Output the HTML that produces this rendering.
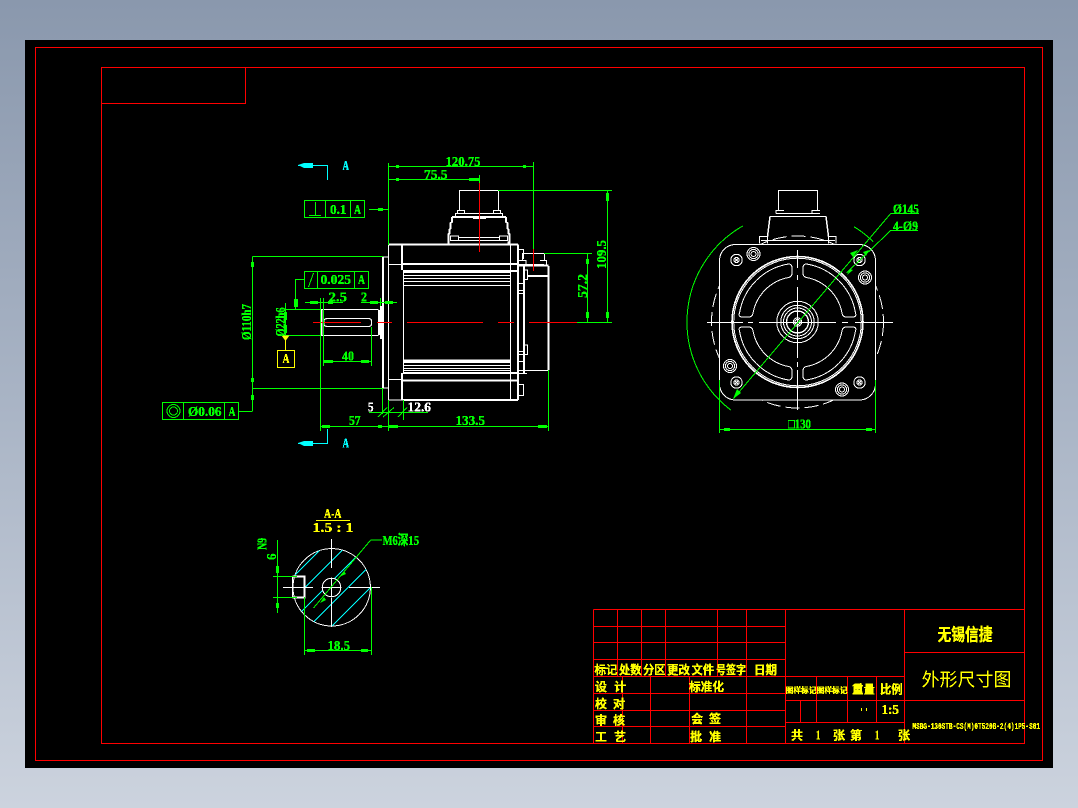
<!DOCTYPE html>
<html><head><meta charset="utf-8"><title>CAD drawing</title>
<style>
html,body{margin:0;padding:0;width:1078px;height:808px;overflow:hidden;background:linear-gradient(180deg,#8a98ad 0%,#a9b4c5 50%,#ccd3de 100%)}
svg{position:absolute;left:0;top:0;display:block}
.l{fill:none;shape-rendering:crispEdges}
.r{stroke:#f00}.g{stroke:#0f0}.w{stroke:#fff}.y{stroke:#ff0}.c{stroke:#0ff}
.t{font-family:"Liberation Serif",serif;font-weight:700;font-size:14px;stroke-width:.35px}
.k{font-family:"Liberation Sans","Noto Sans CJK SC",sans-serif;font-weight:700;font-size:12px;stroke:#ff0;stroke-width:.25px}
.fg{fill:#0f0;stroke:#0f0}.fw{fill:#fff;stroke:#fff}.fy{fill:#ff0;stroke:#ff0}.fc{fill:#0ff;stroke:#0ff}
</style></head><body>
<svg width="1078" height="808" viewBox="0 0 1078 808" xmlns="http://www.w3.org/2000/svg">
<defs>
<filter id="al" filterUnits="userSpaceOnUse" x="0" y="0" width="1078" height="808" color-interpolation-filters="sRGB">
<feComponentTransfer><feFuncA type="discrete" tableValues="0 0 1 1"/></feComponentTransfer>
</filter>
<clipPath id="outsq"><path clip-rule="evenodd" d="M690 220H905V425H690z M719 244H876V400H719z"/></clipPath>
<path id="win" d="M-58-9A59.5 59.5 0 0 1-9-58Q-5.5-58-5.5-54V-49Q-5.5-45-9-44.5A44.5 44.5 0 0 0-44.5-9Q-45-5-49-5H-55Q-59.5-5-58-9Z"/>
<g id="bolt"><circle r="5.7"/><circle r="2.6"/><path d="M-1.500-1.500L1.500 1.500M-1.500 1.500L1.500-1.500"/></g>
<g id="scr"><circle r="6.5"/><circle r="4.6"/><circle r="2.5"/></g>
</defs>

<rect x="25" y="40" width="1028" height="728" fill="#000"/>

<!-- red frames and title block -->
<path class="l r" d="M35.5 47.5H1042.5V760.5H35.5Z M101.5 67.5H1024.5V743.5H101.5Z M101.5 103.5H245.5V67.5
M593.5 609.5H1024.5 M593.5 609.5V743.5
M593.5 626.5H785.5 M593.5 642.5H785.5 M593.5 659.5H785.5 M593.5 676.5H904.5 M593.5 693.5H785.5 M593.5 710.5H785.5 M593.5 726.5H785.5
M617.5 609.5V676.5 M641.5 609.5V676.5 M665.5 609.5V676.5 M717.5 609.5V676.5 M746.5 609.5V743.5 M785.5 609.5V743.5
M622.5 676.5V743.5 M650.5 676.5V743.5 M689.5 676.5V743.5
M816.5 676.5V722.5 M847.5 676.5V722.5 M876.5 676.5V722.5 M904.5 609.5V743.5
M785.5 700.5H1024.5 M785.5 722.5H904.5 M800.5 700.5V722.5 M904.5 652.5H1024.5"/>

<!-- front view white -->
<g class="l w">
<path stroke-width="1" d="M383 257H388.5M383 388H388.5M388.5 244.5H518M388.5 264.5H403M388.5 379.5H403M388.5 400H403M388.5 244.5V400
M321 309.5H378M321 335.5H378M378.5 309.5V335.5
M403.5 270V373M510.5 244.5V400
M403 272.5H510M403 275.5H510M403 278.5H510M403 281.5H510M403 285.5H510
M403 365.5H510M403 368.5H510M403 370.5H510
M518 249.5H523.5V259
M522.5 260V253.5H544.5V260M516.5 264.5H544
M523.5 270H527.5V279.5H523.5M523.5 345H527.5V354.5H523.5
M518 283.5H523.5M518 290.5H523.5M518 293.5H523.5M518 351.5H523.5M518 354.5H523.5M518 361.5H523.5M518 370.5H548M518 373.5H527
M518 384.5H523.5V395.5H518
M518.5 260.5H526V264.5H518.5V260.5ZM540 260.5H546.5V264.5"/>
<path stroke-width="2" d="M383 257V388M402 244.5V270M402 373V400M403 264H518M403 271H518M403 361H510M403 373H518M403 380.5H518M403 400H518M518 244.5V400M388 244.5H518M524 265V373M548.5 266V370M518 265.5H548.5M527 276H548M321.5 309V336M380 310V335"/>
<rect x="380" y="306" width="3" height="33" fill="#fff" stroke="none"/>
<rect x="403" y="359.5" width="107" height="3.5" fill="#fff" stroke="none"/>
<path stroke-width="1.2" d="M328 318.5H368Q371.5 318.5 371.5 321V324Q371.5 326.5 368 326.5H328Q323.8 326.5 323.8 324V321Q323.8 318.5 328 318.5Z"/>
<!-- connector front -->
<path stroke-width="1" d="M459.5 211V190.5H498.5V211M457.5 213.5V210.5H464.5V213.5M493.5 213.5V210.5H500.5V213.5M455.5 216V213.5H502.5V216M473.5 217V218.7H485.5V217
M450.5 240V236H458.5V240M499.5 240V236H507.5V240M458 237.5H500M450 240.5H508M449 241.5V244M508 241.5V244"/>
<path stroke-width="1.6" d="M452 217H506M452 217V222L450.5 223V228.5L449.5 229.5V233.5L448.5 234V244M506 217V222L507.5 223V228.5L508.5 229.5V233.5L509.5 234V244"/>
</g>

<!-- red centerlines -->
<path class="l r" d="M313 322.5H361M377 322.5H392M407 322.5H483M498 322.5H514M529 322.5H577M479.5 183V252M533.5 249V271"/>

<!-- green dims -->
<path class="l g" d="M388.5 163V245M388.5 400V431M388.5 166.5H533.5M533.5 162V249M388.5 179.5H479.5M479.5 175V183
M498 190.5H612M607.5 190.5V322M544 253.5H592M587.5 253.5V322M577 322.5H612
M548.5 370V431M320.5 426.5H548.5M369 412.5H428M382.5 388V414M403.5 400V420
M252.5 256.5V411M252.5 256.5H383M252.5 388.5H383M239 411.5H252.5
M369 209.5H388.5M304 279.5H295.5V309
M305 302.5H343M361 302.5H397M320.5 298V431M323.5 298V366M371.5 327V366M380.5 298V306
M323.5 361.5H371.5M285.5 309.5H320M285.5 335.5H320M285.5 303V336
M378 417L387 407.5M383 417L394 407.5M398 417L407 407.5
M304.5 200.5H364.5V217.5H304.5ZM325.5 200.5V217.5M350.5 200.5V217.5
M309 215.5H321M315.5 202V215.5
M304.5 271.5H368.5V288.5H304.5ZM317.5 271.5V288.5M354.5 271.5V288.5M308.5 287L313.5 273
M162.5 402.5H238.5V419.5H162.5ZM183.5 402.5V419.5M224.5 402.5V419.5"/>
<g class="l g"><circle cx="173.5" cy="411" r="6.5"/><circle cx="173.5" cy="411" r="4"/></g>
<path fill="#0f0" d="M396 165h3v3h-3zM523 165h3v3h-3zM396 178h3v3h-3zM469 178h10v3h-10zM606 193h3v8h-3zM606 312h3v6h-3zM586 259h3v5h-3zM586 312h3v6h-3zM322 425h8v3h-8zM378 425h4v3h-4zM389 425h9v3h-9zM538 425h9v3h-9zM251 262h3v5h-3zM251 378h3v4h-3zM251 395h3v5h-3zM310 301h8v3h-8zM328 301h5v3h-5zM370 301h8v3h-8zM385 301h8v3h-8zM324 360h9v3h-9zM361 360h8v3h-8zM284 312h3v8h-3zM284 325h3v8h-3zM294 299h4v8h-4zM378 208h5v3h-5z"/>

<!-- yellow datum -->
<path fill="#ff0" d="M281.5 335.5H289.5L285.5 341Z"/>
<path class="l y" d="M285.5 340V350M277.5 350.5H294.5V367.5H277.5Z"/>

<!-- cyan section marks -->
<path class="l c" d="M298 165.5H327.5V180M327.5 429V443.5H298"/>
<path fill="#0ff" d="M298 165L304 163H313V168H304ZM298 443L304 441H313V446H304Z"/>

<!-- right view -->
<g class="l w">
<rect x="719.5" y="244.5" width="156" height="155.5" rx="16"/>
<circle cx="797.5" cy="322" r="86" stroke-dasharray="14 5" clip-path="url(#outsq)"/>
<circle cx="797.5" cy="322" r="65.5" stroke-width="1.6"/>
<circle cx="797.5" cy="322" r="63.8"/>
<circle cx="797.5" cy="322" r="20.7"/><circle cx="797.5" cy="322" r="16.7"/><circle cx="797.5" cy="322" r="14"/><circle cx="797.5" cy="322" r="11" stroke-width="1.4"/><circle cx="797.5" cy="322" r="4.2"/><circle cx="797.5" cy="322" r="2.6"/>
<use href="#win" transform="translate(797.5 322)"/>
<use href="#win" transform="translate(797.5 322) scale(-1 1)"/>
<use href="#win" transform="translate(797.5 322) scale(1 -1)"/>
<use href="#win" transform="translate(797.5 322) scale(-1 -1)"/>
<use href="#bolt" transform="translate(736.5 260)"/><use href="#bolt" transform="translate(859.5 260)"/>
<use href="#bolt" transform="translate(736.5 382.5)"/><use href="#bolt" transform="translate(859.5 382.5)"/>
<use href="#scr" transform="translate(753.5 254)"/><use href="#scr" transform="translate(865 277.5)"/>
<use href="#scr" transform="translate(730 366)"/><use href="#scr" transform="translate(842 389.5)"/>
<path d="M707 322.5H743M748 322.5H753M759 322.5H836M842 322.5H848M855 322.5H893M797.5 250V268M797.5 275V280M797.5 287V358M797.5 362V367M797.5 370V410
M778.5 210.5V190.5H817.5V210.5M776 213.5V210.5H784M812 213.5V210.5H820M776 213.5H820M770 216.5H826M759.5 243.5V236.5H767.5V243.5M828.5 243.5V236.5H836V243.5M761 240.5H835"/>
<path stroke-width="1.5" d="M770 216.5L767.5 236.5M826 216.5L828.5 236.5"/>
</g>
<g class="l g">
<path d="M742.7 226A110.5 110.5 0 0 0 730.7 410M854 226.7A110.5 110.5 0 0 1 873.3 241.7"/>
<path d="M733.5 398.5L890.7 213.5H919M846.7 272.7L890.7 230.5H918M719.5 380V433M875.5 380V433M719.5 429.5H875.5"/>
</g>
<path fill="#0f0" d="M724 428h6v3h-6zM866 428h6v3h-6zM733 399L741 393L737 389ZM858 250L853 257L850 253ZM869 250L866 256L863 252ZM850 269L847 275L853 270Z"/>

<!-- section view -->
<circle class="l w" cx="331.7" cy="587.3" r="38.7"/>
<path class="l c" d="M295 575L319.4 550.6M304.5 588.2L342.5 550.2M301.5 611.5L322.8 590.2M334.6 578.4L355.9 557.1M313.9 621.6L366 569.5M332 626L370.4 587.6"/>
<g class="l w">
<circle cx="331.5" cy="587.5" r="9.3"/>
<path d="M283 587.5H313M349 587.5H380M331.5 539V568M331.5 598V627M322.5 587.5H341M331.5 578V597M292.5 576.5V597.5"/>
<path stroke-width="1.8" d="M292.5 576.5H304.5V597.5H292.5"/>
</g>
<path class="l g" d="M277.5 540V613M273 576.5H297M273 597.5H297M304.5 597V655M371.5 587V655M304.5 650.5H371.5M313.5 608L370.7 540H382"/>
<path fill="#0f0" d="M276 566h3v7h-3zM276 603h3v5h-3zM307 649h8v3h-8zM361 649h7v3h-7zM339 577L344 571L346 574ZM320 603L324 597L326 600Z"/>
<path class="l y" d="M316 520.5H350"/>

<!-- text -->
<g filter="url(#al)">
<g class="t fg">
<text x="445.5" y="166" textLength="35" lengthAdjust="spacingAndGlyphs">120.75</text>
<text x="424" y="179" textLength="23.5" lengthAdjust="spacingAndGlyphs">75.5</text>
<text x="455.5" y="425" textLength="29.5" lengthAdjust="spacingAndGlyphs">133.5</text>
<text x="349" y="425" textLength="11.5" lengthAdjust="spacingAndGlyphs">57</text>
<text transform="translate(606 269) rotate(-90)" textLength="29" lengthAdjust="spacingAndGlyphs">109.5</text>
<text transform="translate(587 298) rotate(-90)" textLength="24" lengthAdjust="spacingAndGlyphs">57.2</text>
<text transform="translate(251 340) rotate(-90)" textLength="36" lengthAdjust="spacingAndGlyphs">Ø110h7</text>
<text transform="translate(285 336.5) rotate(-90)" textLength="29" lengthAdjust="spacingAndGlyphs">Ø22h6</text>
<text x="328.5" y="301.5" textLength="18.5" lengthAdjust="spacingAndGlyphs">2.5</text>
<text x="361" y="301.5" textLength="6" lengthAdjust="spacingAndGlyphs">2</text>
<text x="342" y="360.5" textLength="12" lengthAdjust="spacingAndGlyphs">40</text>
<text x="330" y="214" textLength="16.5" lengthAdjust="spacingAndGlyphs">0.1</text>
<text x="354" y="214" textLength="7" lengthAdjust="spacingAndGlyphs">A</text>
<text x="320.5" y="284" textLength="30.5" lengthAdjust="spacingAndGlyphs">0.025</text>
<text x="358" y="284" textLength="7" lengthAdjust="spacingAndGlyphs">A</text>
<text x="188" y="416" textLength="33.5" lengthAdjust="spacingAndGlyphs">Ø0.06</text>
<text x="228.5" y="416" textLength="7" lengthAdjust="spacingAndGlyphs">A</text>
<text x="893" y="213.5" textLength="26" lengthAdjust="spacingAndGlyphs">Ø145</text>
<text x="893" y="230.5" textLength="25" lengthAdjust="spacingAndGlyphs">4-Ø9</text>
<text x="788" y="428.5" textLength="23" lengthAdjust="spacingAndGlyphs">□130</text>
<text x="327.5" y="650" textLength="22.5" lengthAdjust="spacingAndGlyphs">18.5</text>
<text x="382.5" y="545" textLength="36.5" lengthAdjust="spacingAndGlyphs" style="font-family:'Liberation Serif','Noto Sans CJK SC',serif">M6深15</text>
<text transform="translate(266.5 550) rotate(-90)" textLength="12" lengthAdjust="spacingAndGlyphs">N9</text>
<text transform="translate(276 560) rotate(-90)" textLength="6.5" lengthAdjust="spacingAndGlyphs">6</text>
</g>
<g class="t fw">
<text x="407.5" y="411.5" textLength="23.5" lengthAdjust="spacingAndGlyphs">12.6</text>
<text x="368" y="411.5" textLength="5.5" lengthAdjust="spacingAndGlyphs">5</text>
</g>
<g class="t fc">
<text x="342.5" y="170" textLength="6.5" lengthAdjust="spacingAndGlyphs">A</text>
<text x="342.5" y="447.5" textLength="6.5" lengthAdjust="spacingAndGlyphs">A</text>
</g>
<g class="t fy">
<text x="282.5" y="363" textLength="7" lengthAdjust="spacingAndGlyphs">A</text>
<text x="324" y="518" textLength="17.5" lengthAdjust="spacingAndGlyphs">A-A</text>
<text x="312.5" y="532" textLength="41" lengthAdjust="spacingAndGlyphs">1.5 : 1</text>
<text x="881.5" y="714" textLength="17.5" lengthAdjust="spacingAndGlyphs">1:5</text>
<text x="816" y="739.5" textLength="4.5" lengthAdjust="spacingAndGlyphs">1</text>
<text x="875" y="739.5" textLength="4.5" lengthAdjust="spacingAndGlyphs">1</text>
<text x="912.5" y="729" textLength="127.5" lengthAdjust="spacingAndGlyphs" style="font-family:'Liberation Mono',monospace;font-size:9px;stroke-width:.2px">MSBG-130STB-CS(M)0T520B-2(4)1P5-S01</text>
</g>
<path fill="#ff0" d="M861 708h1v3h-1zM866 708h1v3h-1z"/>
<g class="k fy">
<text x="594.5" y="674" textLength="23" lengthAdjust="spacingAndGlyphs">标记</text>
<text x="619" y="674" textLength="22.5" lengthAdjust="spacingAndGlyphs">处数</text>
<text x="643" y="674" textLength="22.5" lengthAdjust="spacingAndGlyphs">分区</text>
<text x="667" y="674" textLength="23" lengthAdjust="spacingAndGlyphs">更改</text>
<text x="691.5" y="674" textLength="22.5" lengthAdjust="spacingAndGlyphs">文件</text>
<text x="716" y="674" textLength="30" lengthAdjust="spacingAndGlyphs">号签字</text>
<text x="754" y="674" textLength="23" lengthAdjust="spacingAndGlyphs">日期</text>
<text x="595" y="691">设</text><text x="614" y="691">计</text>
<text x="595" y="708">校</text><text x="613" y="708">对</text>
<text x="595" y="724.5">审</text><text x="613" y="724.5">核</text>
<text x="595" y="741">工</text><text x="614" y="741">艺</text>
<text x="689" y="691" textLength="35" lengthAdjust="spacingAndGlyphs">标准化</text>
<text x="691" y="723">会</text><text x="709" y="723">签</text>
<text x="690" y="741">批</text><text x="709" y="741">准</text>
<text x="785.5" y="693" textLength="31" lengthAdjust="spacingAndGlyphs" style="font-size:8px">图样标记</text>
<text x="816.5" y="693" textLength="31" lengthAdjust="spacingAndGlyphs" style="font-size:8px">图样标记</text>
<text x="852" y="693.5" textLength="23" lengthAdjust="spacingAndGlyphs">重量</text>
<text x="880" y="693.5" textLength="22.5" lengthAdjust="spacingAndGlyphs">比例</text>
<text x="791" y="739.5">共</text><text x="833" y="739.5">张</text><text x="850" y="739.5">第</text><text x="898" y="739.5">张</text>
<text x="937.5" y="640.5" textLength="55" lengthAdjust="spacingAndGlyphs" style="font-size:17px">无锡信捷</text>
<text x="921.5" y="686" textLength="90" lengthAdjust="spacingAndGlyphs" style="font-size:18px;font-weight:400;stroke:none">外形尺寸图</text>
</g>
</g>
</svg>
</body></html>
